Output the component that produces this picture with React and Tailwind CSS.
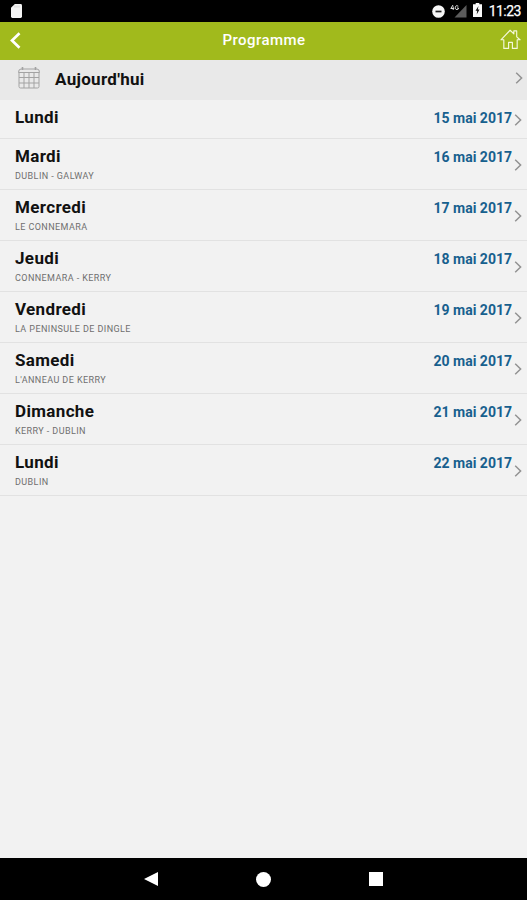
const days = [
  { day: 'Lundi', date: '15 mai 2017' },
  { day: 'Mardi', date: '16 mai 2017', place: 'DUBLIN - GALWAY' },
  { day: 'Mercredi', date: '17 mai 2017', place: 'LE CONNEMARA' },
  { day: 'Jeudi', date: '18 mai 2017', place: 'CONNEMARA - KERRY' },
  { day: 'Vendredi', date: '19 mai 2017', place: 'LA PENINSULE DE DINGLE' },
  { day: 'Samedi', date: '20 mai 2017', place: "L'ANNEAU DE KERRY" },
  { day: 'Dimanche', date: '21 mai 2017', place: 'KERRY - DUBLIN' },
  { day: 'Lundi', date: '22 mai 2017', place: 'DUBLIN' },
];

function Chevron() {
  return (
    <svg className="h-3 w-2 shrink-0" viewBox="0 0 8 12" fill="none" stroke="#929292" strokeWidth="1.5">
      <path d="M1.2 0.8 6.6 6 1.2 11.2" />
    </svg>
  );
}

function StatusBar() {
  return (
    <div className="flex h-[22px] shrink-0 items-center justify-between bg-black pr-[6px] pl-[11px] text-white">
      <svg className="h-[14px] w-[11px]" viewBox="0 0 11 14" fill="#f4f4f4">
        <path d="M3.8 0H9.6Q11 0 11 1.4V12.6Q11 14 9.6 14H1.4Q0 14 0 12.6V3.8Z" />
        <path d="M4 1.5V3.6M6 1.5V3.6M8 1.5V3.6" stroke="#c4c4c4" strokeWidth=".7" />
      </svg>
      <div className="flex items-center">
        <svg className="mt-px mr-[5px] h-[13px] w-[13px]" viewBox="0 0 13 13">
          <circle cx="6.5" cy="6.5" r="6.3" fill="#f6f6f6" />
          <path d="M3.5 6.5H9.5" stroke="#222" strokeWidth="1.7" />
        </svg>
        <svg className="mr-[6px] h-[14px] w-[17px]" viewBox="0 0 17 14">
          <path d="M16.5 1V13.5H4.5Z" fill="#5c5c5c" />
          <path d="M3 1 .8 4.5H4.2M3.2 2.5V6M8.3 2.2Q5.3 .8 5.3 3.7T8.4 5V4H7" fill="none" stroke="#ddd" strokeWidth="1" />
        </svg>
        <svg className="mr-[7px] mb-[2px] h-[14px] w-[9px]" viewBox="0 0 9 14">
          <path d="M2.7 0H6.3V1.3H9V14H0V1.3H2.7Z" fill="#fafafa" />
          <path d="M5.5 3 2.5 7.8H4.2L3.7 11.5 6.5 6.6H4.8Z" fill="#111" />
        </svg>
        <span className="text-[14px] leading-[22px] tracking-[-0.5px] [-webkit-text-stroke:0.25px_white]">11:23</span>
      </div>
    </div>
  );
}

function Header() {
  return (
    <header className="grid h-[38px] shrink-0 grid-cols-3 items-center bg-[#a1ba1c] pr-[6px] pb-[2px] pl-[10px] text-white">
      <svg className="h-[17px] w-[11px]" viewBox="0 0 11 17" fill="none" stroke="#fff" strokeWidth="2.7">
        <path d="M9.5 1.2 2 8.5 9.5 15.8" />
      </svg>
      <h1 className="mr-[3px] text-center text-[15px] leading-5 font-medium tracking-[0.45px]">Programme</h1>
      <svg className="mb-[2px] h-[21px] w-[21px] justify-self-end" viewBox="0 0 22 22" fill="none" stroke="#f4f8dc" strokeWidth="1.2" strokeLinejoin="round">
        <path d="M1 11.3 10.6 1.3 14.5 5.2V2H17.5V8.2L21 11.3H18V20.3H13V14H9V20.3H4V11.3Z" />
      </svg>
    </header>
  );
}

function CalendarIcon() {
  return (
    <svg className="mb-[2px] h-[23px] w-[22px]" viewBox="0 0 22 23" fill="none" stroke="#a3a3a3" strokeWidth="1">
      <path d="M1 6.5V20.5Q1 22 2.5 22H19.5Q21 22 21 20.5V6.5" />
      <path d="M3 3H19Q21.5 3 21.5 6.5H.5Q.5 3 3 3Z" />
      <path d="M1 11.5H21M1 17H21M6 6.5V22M11 6.5V22M16 6.5V22" />
      <path d="M4.5 1V4M17.5 1V4" strokeWidth="1.6" />
    </svg>
  );
}

export default function App() {
  return (
    <div className="flex h-[900px] w-[527px] flex-col overflow-hidden bg-[#f2f2f2] font-['Roboto',sans-serif]">
      <StatusBar />
      <Header />
      <div className="flex h-10 shrink-0 items-center bg-[#e9e9e9] pr-[4px] pb-[3px] pl-[18px]">
        <CalendarIcon />
        <span className="ml-[15px] flex-1 text-[17px] leading-5 font-bold tracking-[0.3px] text-[#111]">Aujourd'hui</span>
        <div className="pb-[2px]">
          <Chevron />
        </div>
      </div>
      <ul className="flex-1">
        {days.map(({ day, date, place }) => (
          <li
            key={date}
            className="flex h-[39px] border-b border-[#e2e2e2] pt-[7px] pr-[5px] pl-[15px] has-[p]:h-[51px]"
          >
            <div className="flex-1">
              <div className="text-[17px] leading-[21px] font-bold tracking-[0.35px] text-[#111]">{day}</div>
              {place && <p className="mt-[4px] text-[9px] leading-[11px] tracking-[0.42px] text-[#6f6f6f]">{place}</p>}
            </div>
            <time className="mr-[2px] pt-[1px] text-[14px] leading-[21px] font-bold text-[#17608e]">{date}</time>
            <div className={place ? 'pt-[13px]' : 'pt-[7px]'}>
              <Chevron />
            </div>
          </li>
        ))}
      </ul>
      <nav className="flex h-[42px] shrink-0 items-center justify-center gap-[98px] bg-black">
        <svg className="h-[14px] w-[14px]" viewBox="0 0 14 14" fill="#fff">
          <path d="M0 7 14 0V14Z" />
        </svg>
        <div className="size-[15px] rounded-full bg-white" />
        <div className="size-[14px] bg-white" />
      </nav>
    </div>
  );
}
